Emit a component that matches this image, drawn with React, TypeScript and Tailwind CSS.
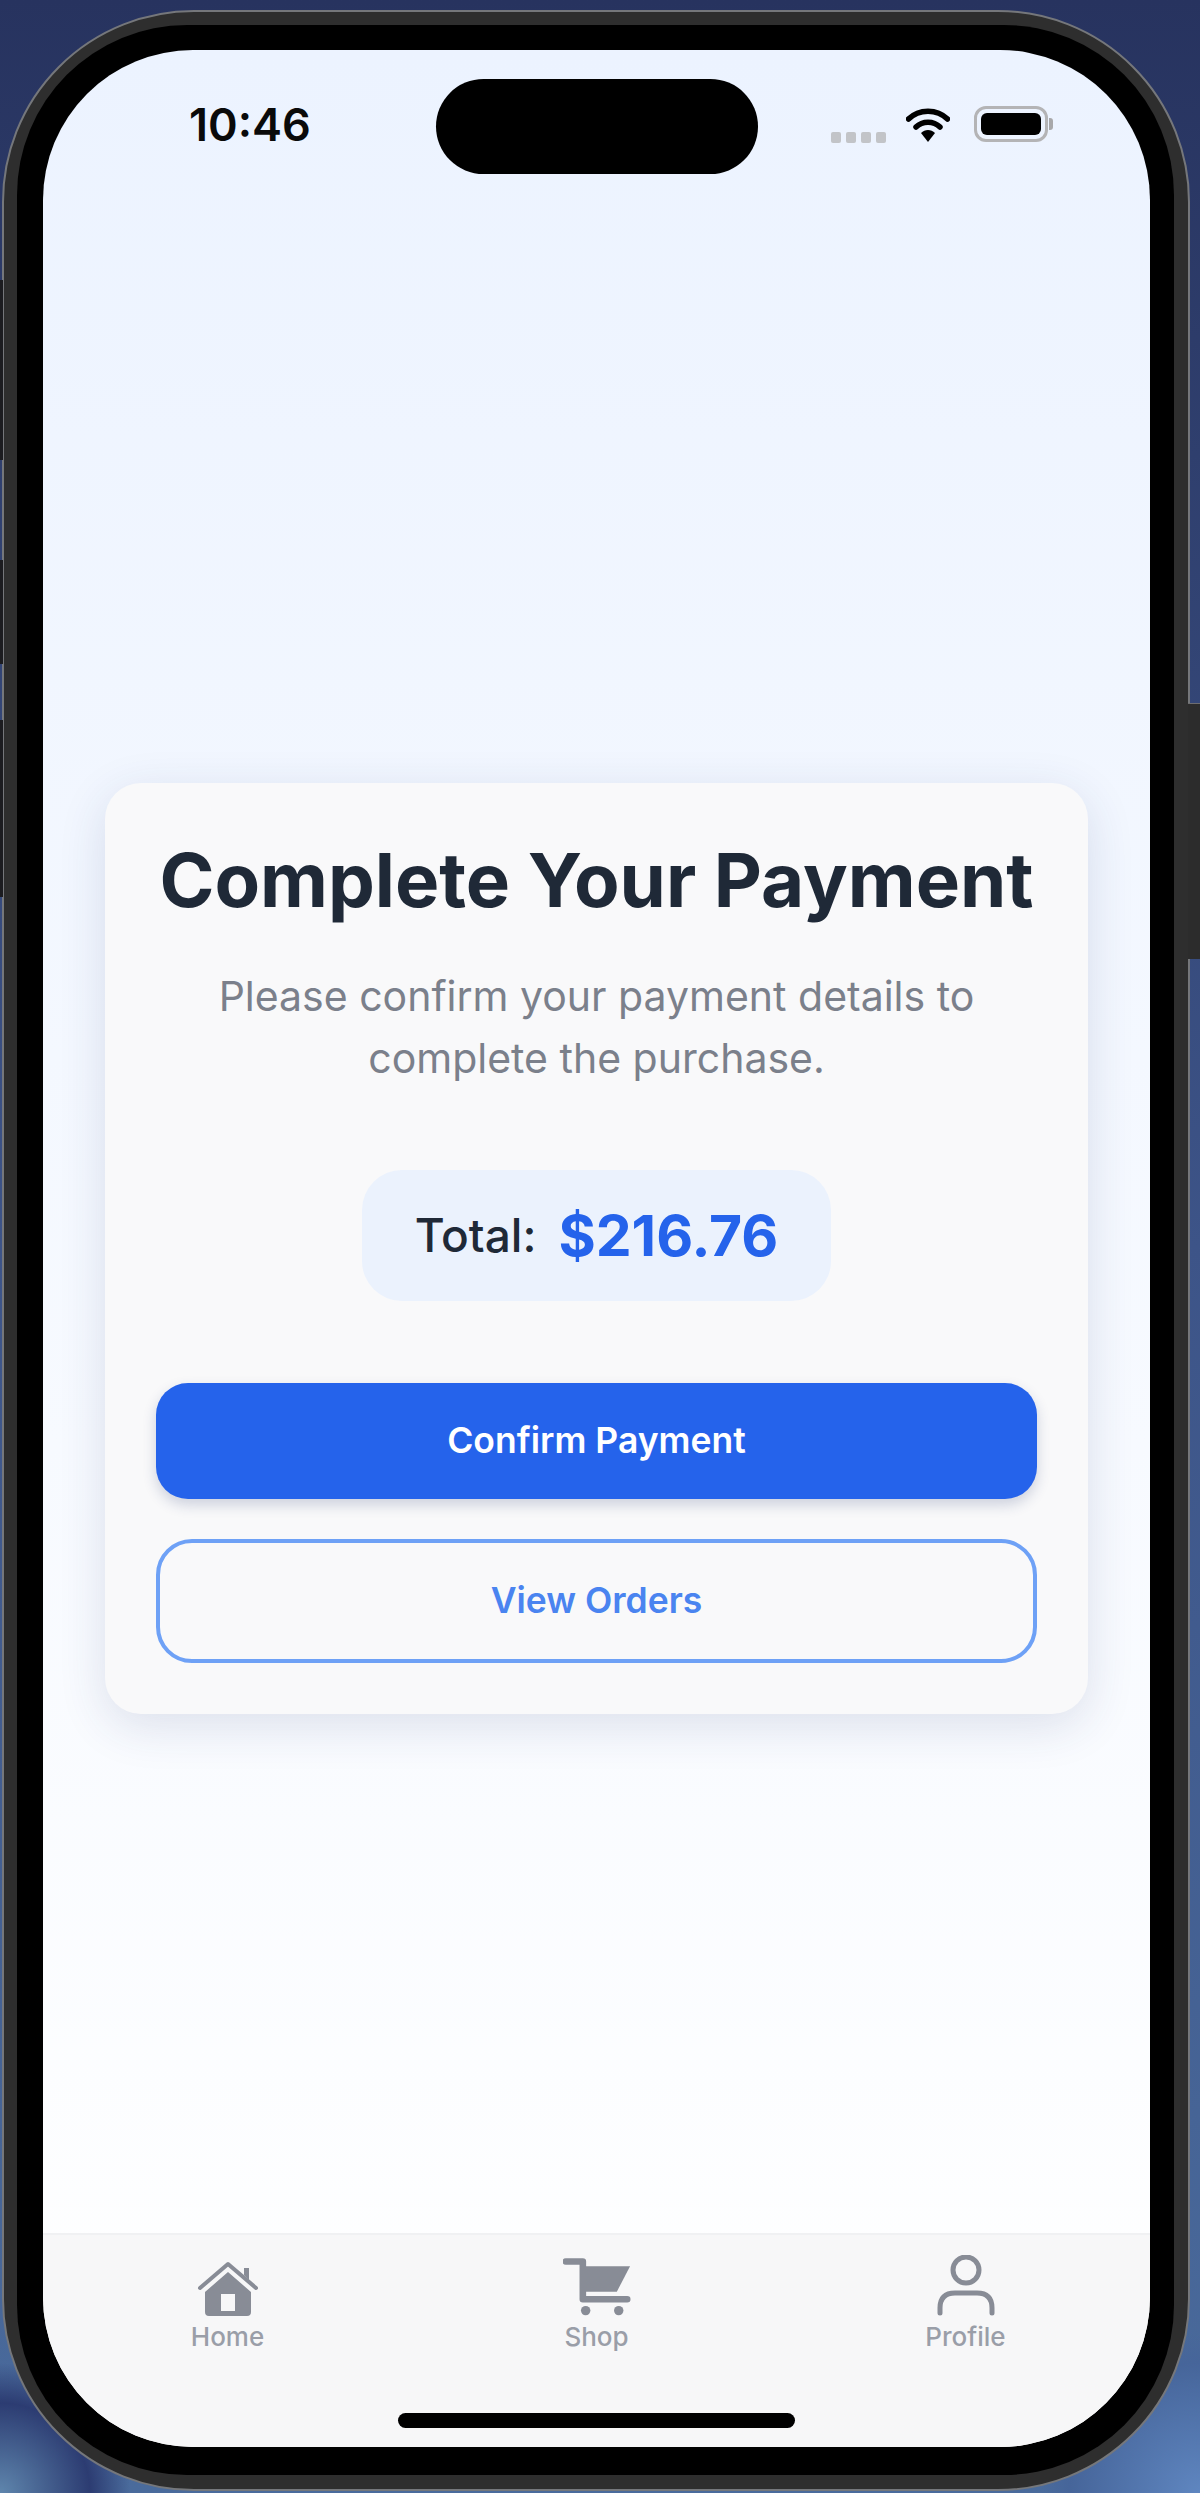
function HomeIcon() {
  return (
    <svg width="62" height="56" viewBox="0 0 62 56" fill="none">
      <path d="M3 27 L31 3 L59 27" stroke="#888c96" strokeWidth="4" strokeLinecap="round" strokeLinejoin="round" />
      <path d="M47 14 V7 H52 V19" fill="#888c96" />
      <path fillRule="evenodd" clipRule="evenodd" d="M31 11 L54 31 V51 Q54 55 50 55 H12 Q8 55 8 51 V31 Z M24 33 V50 H38 V33 Z" fill="#888c96" />
    </svg>
  )
}

function CartIcon() {
  return (
    <svg width="68" height="60" viewBox="0 0 72 62" fill="none">
      <path d="M3 4 H21 V44 H68" stroke="#888c96" strokeWidth="7" strokeLinecap="round" strokeLinejoin="round" />
      <path d="M24 9 H71 L57 36 H24 Z" fill="#888c96" />
      <circle cx="24" cy="56" r="5" fill="#888c96" />
      <circle cx="59" cy="56" r="5" fill="#888c96" />
    </svg>
  )
}

function ProfileIcon() {
  return (
    <svg width="58" height="62" viewBox="0 0 58 62" fill="none">
      <circle cx="29" cy="15" r="13" stroke="#888c96" strokeWidth="5" />
      <path d="M3 58 V53 Q3 38 18 38 H40 Q55 38 55 53 V58" stroke="#888c96" strokeWidth="5" strokeLinecap="round" />
    </svg>
  )
}

function WifiIcon() {
  return (
    <svg width="44" height="38" viewBox="0 0 44 38" fill="none">
      <path d="M2.5 13 C13 2.5 31 2.5 41.5 13" stroke="#000" strokeWidth="5.5" strokeLinecap="round" />
      <path d="M10 21 C16.5 14.5 27.5 14.5 34 21" stroke="#000" strokeWidth="5.5" strokeLinecap="round" />
      <path d="M15 27 C19 23 25 23 29 27 L22 36 Z" fill="#000" />
    </svg>
  )
}

function BatteryIcon() {
  return (
    <div className="flex items-center">
      <div className="w-[74px] h-[36px] rounded-[12px] border-[3px] border-[#b4b4b6] p-[4px]">
        <div className="w-full h-full rounded-[6px] bg-black"></div>
      </div>
      <div className="ml-[1px] w-[4px] h-[12px] rounded-r-[3px] bg-[#a8a8aa]"></div>
    </div>
  )
}

function TabItem({ icon, label }: { icon: React.ReactNode; label: string }) {
  return (
    <div className="flex-1 flex flex-col items-center">
      <div className="h-[63px] flex items-end justify-center">{icon}</div>
      <span className="mt-[5px] text-[26px] leading-[30px] font-medium text-[#9a9ea8]">{label}</span>
    </div>
  )
}

export default function App() {
  return (
    <div className="relative w-[1200px] h-[2493px] overflow-hidden pt-[10px] pl-[2px] bg-[radial-gradient(circle_at_0%_100%,#5f86ad_0px,#2c3c72_90px,transparent_130px),radial-gradient(circle_at_100%_100%,#5f86c0_0px,#46659a_130px,transparent_160px),linear-gradient(to_bottom,#27335f,#3d5488_50%,#4a6b9c)] [font-family:Inter,sans-serif]">
      {/* side buttons */}
      <div className="absolute left-0 top-[280px] w-[3px] h-[180px] bg-[#1c1c20]"></div>
      <div className="absolute left-0 top-[560px] w-[3px] h-[104px] bg-[#1c1c20]"></div>
      <div className="absolute left-0 top-[720px] w-[3px] h-[177px] bg-[#1c1c20]"></div>
      <div className="absolute right-0 top-[703px] w-[12px] h-[256px] bg-[#2c2c2c] border-t border-[#6d6d70]"></div>

      <div className="w-[1188px] h-[2481px] rounded-[192px] bg-[#2e2e2e] border-2 border-[#75777b] pt-[13px] pl-[13px]">
        <div className="w-[1157px] h-[2450px] rounded-[170px] bg-black pt-[25px] pl-[26px]">
          <div className="flex flex-col w-[1107px] h-[2397px] rounded-[150px] overflow-hidden bg-linear-to-b from-[#ecf3ff] to-white">
            {/* status bar */}
            <div className="h-[129px] shrink-0 grid grid-cols-[1fr_322px_1fr] pt-[29px]">
              <div className="pl-[146px] pt-[19px] text-[45px] leading-[54px] font-semibold text-[#0a0a0a]">10:46</div>
              <div className="h-[95px] rounded-full bg-black"></div>
              <div className="flex justify-end items-start pt-[27px] pr-[97px]">
                <div className="flex gap-[5px] mt-[26px] mr-[20px]">
                  <div className="w-[10px] h-[11px] rounded-[2px] bg-[#c2c4c8]"></div>
                  <div className="w-[10px] h-[11px] rounded-[2px] bg-[#c2c4c8]"></div>
                  <div className="w-[10px] h-[11px] rounded-[2px] bg-[#c2c4c8]"></div>
                  <div className="w-[10px] h-[11px] rounded-[2px] bg-[#c2c4c8]"></div>
                </div>
                <WifiIcon />
                <div className="ml-[24px]">
                  <BatteryIcon />
                </div>
              </div>
            </div>

            {/* main */}
            <div className="flex-1 px-[62px] pt-[604px]">
              <div className="h-[931px] rounded-[36px] bg-[#f9f9fa] shadow-[0_12px_48px_rgba(40,60,110,0.14)] px-[51px] pt-[49px] flex flex-col items-center">
                <h1 className="text-[74.4px] leading-[96px] font-bold text-[#1f2937] whitespace-nowrap">Complete Your Payment</h1>
                <p className="mt-[37px] text-[41px] leading-[62px] text-[#7b808b] text-center">
                  Please confirm your payment details to<br />complete the purchase.
                </p>
                <div className="mt-[81px] w-[469px] h-[131px] rounded-[40px] bg-[#ebf2fd] flex items-center justify-center gap-[22px]">
                  <span className="text-[46px] font-medium text-[#1f2937]">Total:</span>
                  <span className="text-[57px] font-bold text-[#2563eb]">$216.76</span>
                </div>
                <button className="mt-[82px] w-full h-[116px] shrink-0 rounded-[32px] bg-[#2563eb] shadow-[0_6px_14px_rgba(30,50,110,0.2)] text-[35.5px] font-semibold text-white">
                  Confirm Payment
                </button>
                <button className="mt-[40px] w-full h-[124px] shrink-0 rounded-[36px] border-[4px] border-[#6ea1f6] text-[35.5px] font-semibold text-[#4a84f0]">
                  View Orders
                </button>
              </div>
            </div>

            {/* tab bar */}
            <div className="relative h-[214px] shrink-0 bg-[#f7f7f8] border-t-2 border-[#f0f1f3] flex pt-[19px]">
              <TabItem icon={<HomeIcon />} label="Home" />
              <TabItem icon={<CartIcon />} label="Shop" />
              <TabItem icon={<ProfileIcon />} label="Profile" />
              <div className="absolute left-[355px] bottom-[19px] w-[397px] h-[15px] rounded-full bg-black"></div>
            </div>
          </div>
        </div>
      </div>
    </div>
  )
}
